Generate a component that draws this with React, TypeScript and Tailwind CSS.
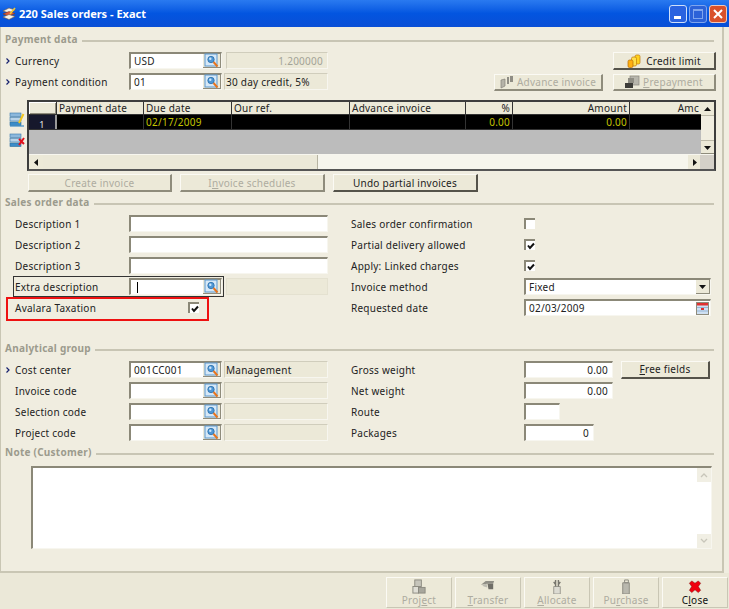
import type { ReactNode } from "react";

const SearchBtn = () => (
  <span className="ml-auto flex h-full w-[18px] shrink-0 items-center justify-center bg-[#ece9d8] border-r border-b border-[#8f8c7c]">
    <svg width="15" height="15" viewBox="0 0 15 15">
      <rect x="1" y="1" width="12" height="12" fill="#d6e8f7" stroke="#5a98cf" strokeWidth="1" />
      <circle cx="7" cy="6.5" r="3.2" fill="#4f97d6" stroke="#2a6fa8" strokeWidth="0.8" />
      <circle cx="6.3" cy="5.8" r="1.2" fill="#cfe6f8" />
      <line x1="9.5" y1="9" x2="13.5" y2="13.5" stroke="#e8741c" strokeWidth="2" />
    </svg>
  </span>
);

const Sunken = ({ className, children }: { className: string; children?: ReactNode }) => (
  <div className={`flex h-[17px] shrink-0 items-center bg-white border-t-2 border-l-2 border-t-[#8b8878] border-l-[#8b8878] border-r border-b border-r-[#f7f6ef] border-b-[#f7f6ef] ${className}`}>
    {children}
  </div>
);

const Lookup = ({ value, caret }: { value?: string; caret?: boolean }) => (
  <Sunken className="w-[93px]">
    <span className="pl-[3px] text-[#222]">{value}</span>
    {caret && <span className="ml-[3px] h-[11px] w-px bg-black" />}
    <SearchBtn />
  </Sunken>
);

const ReadOnly = ({ value, right }: { value?: string; right?: boolean }) => (
  <div className={`flex h-[17px] shrink-0 items-center bg-[#ece9d8] border border-t-[#d0cdbc] border-l-[#d0cdbc] border-r-[#f7f6ef] border-b-[#f7f6ef] px-[1px] ${right ? "ml-[4px] w-[102px] justify-end pr-[4px] text-[#a3a397]" : "ml-[2px] w-[104px] text-[#222]"}`}>
    {value}
  </div>
);

const Check = ({ on }: { on?: boolean }) => (
  <span className="flex h-[11px] w-[11px] items-center justify-center bg-white border-t-2 border-l-2 border-t-[#8b8878] border-l-[#8b8878]">
    {on && (
      <svg width="8" height="8" viewBox="0 0 8 8" className="shrink-0">
        <path d="M1 3.5 L3 6 L7 1.5" fill="none" stroke="#111" strokeWidth="2" />
      </svg>
    )}
  </span>
);

const Heading = ({ title, className }: { title: string; className: string }) => (
  <div className={`flex h-[13px] items-center pl-[4px] pr-[8px] ${className}`}>
    <span className="-mt-[2px] font-bold text-[#9c9b8d]">{title}</span>
    <span className="ml-[4px] mt-[3px] h-[2px] flex-1 bg-[#c8c5b4]" />
  </div>
);

const Label = ({ text, mark }: { text: string; mark?: boolean }) => (
  <>
    <span className="flex w-[14px] shrink-0 justify-end pr-[5px]">
      {mark && (
        <svg width="4" height="6" viewBox="0 0 4 6">
          <path d="M0.5 0.5 L3 3 L0.5 5.5" fill="none" stroke="#15206e" strokeWidth="1.2" />
        </svg>
      )}
    </span>
    <span className="w-[114px] shrink-0 text-[#222]">{text}</span>
  </>
);

const Row = ({ children, className = "" }: { children: ReactNode; className?: string }) => (
  <div className={`flex h-[17px] items-center ${className}`}>{children}</div>
);

const RightRow = ({ text, children }: { text: string; children: ReactNode }) => (
  <Row>
    <span className="w-[173px] shrink-0 text-[#222]">{text}</span>
    {children}
  </Row>
);

const Btn = ({ children, className = "", off }: { children: ReactNode; className?: string; off?: boolean }) => (
  <div className={`flex shrink-0 items-center justify-center bg-[#ece9d8] border-t border-l border-t-[#fbfaf4] border-l-[#fbfaf4] border-r-2 border-b-2 ${off ? "border-r-[#8f8c7c] border-b-[#8f8c7c] text-[#aeaca0]" : "border-r-[#55534a] border-b-[#55534a] text-[#222]"} ${className}`}>
    {children}
  </div>
);

const U = ({ children }: { children: ReactNode }) => <span className="underline">{children}</span>;

const columns = [
  { title: "Payment date", w: "w-[87px]" },
  { title: "Due date", w: "w-[88px]", value: "02/17/2009" },
  { title: "Our ref.", w: "w-[118px]" },
  { title: "Advance invoice", w: "w-[116px]" },
  { title: "%", w: "w-[47px]", value: "0.00", right: true },
  { title: "Amount", w: "w-[117px]", value: "0.00", right: true },
  { title: "Amc", w: "w-[71px]", right: true },
];

const TitleIcon = () => (
  <svg width="14" height="14" viewBox="0 0 14 14">
    <path d="M1 4 L7 1 L13 3 L7 6 Z" fill="#f4f1ea" stroke="#7a5a40" strokeWidth="0.6" />
    <path d="M1 7 L7 4.5 L13 6.5 L7 9 Z" fill="#e05a3a" stroke="#7a3a20" strokeWidth="0.6" />
    <path d="M1 10 L7 7.5 L13 9.5 L7 12.5 Z" fill="#f4f1ea" stroke="#7a5a40" strokeWidth="0.6" />
    <path d="M8 7 L13 1" stroke="#f2c832" strokeWidth="1.6" />
  </svg>
);

const EditRows = ({ del }: { del?: boolean }) => (
  <svg width="16" height="15" viewBox="0 0 16 15">
    <rect x="1" y="1" width="11" height="3.5" fill="#8cb8dc" stroke="#3a78ac" strokeWidth="0.6" />
    <rect x="1" y="5.5" width="11" height="3.5" fill="#b9d3e8" stroke="#3a78ac" strokeWidth="0.6" />
    <rect x="1" y="10" width="11" height="3.5" fill="#3b8cc8" stroke="#2a6c9c" strokeWidth="0.6" />
    {del ? (
      <path d="M10 6 L15 11 M15 5 L10 12" stroke="#e0101c" strokeWidth="2" />
    ) : (
      <>
        <path d="M10 11 L14.5 2" stroke="#f2c61e" strokeWidth="2" />
        <path d="M1 14 H15" stroke="#3a8cc8" strokeWidth="1.2" />
      </>
    )}
  </svg>
);

const Tri = ({ d }: { d: string }) => (
  <svg width="7" height="7" viewBox="0 0 7 7">
    <path d={d} fill="#111" />
  </svg>
);

const Coins = () => (
  <svg width="14" height="14" viewBox="0 0 14 14" className="mr-[5px]">
    <rect x="8" y="1" width="5" height="9" rx="1.5" fill="#ffd21e" stroke="#c07a08" strokeWidth="0.7" />
    <rect x="4.5" y="3" width="5" height="9" rx="1.5" fill="#ffe04a" stroke="#c07a08" strokeWidth="0.7" />
    <rect x="1" y="6" width="5" height="7.5" rx="1.5" fill="#ffb010" stroke="#b56a06" strokeWidth="0.7" />
  </svg>
);

const GreyFlags = () => (
  <svg width="14" height="14" viewBox="0 0 14 14" className="mr-[3px]">
    <path d="M1 5 L5 4 V11 L1 13 Z" fill="#b5b3a8" stroke="#85837a" strokeWidth="0.7" />
    <path d="M7 2 L9 2 V9 L7 9 Z M10 1 L13 1 V7 L10 7 Z" fill="#8f8d84" />
  </svg>
);

const GreyServer = () => (
  <svg width="15" height="14" viewBox="0 0 15 14" className="mr-[3px]">
    <rect x="5" y="1" width="9" height="9" fill="#b8b6ac" stroke="#8a887e" strokeWidth="0.7" />
    <path d="M0 13 V8 H8 V13 Z" fill="#3d3c38" />
    <rect x="3" y="3" width="6" height="5" fill="#8f8d84" />
  </svg>
);

const footerIcons: Record<string, ReactNode> = {
  project: (
    <>
      <rect x="4" y="1" width="7" height="7" fill="#c6c5bb" stroke="#8b8a80" />
      <rect x="2" y="8" width="6" height="7" fill="#dfded5" stroke="#8b8a80" />
      <rect x="8" y="9" width="7" height="6" fill="#a8a79d" stroke="#8b8a80" />
    </>
  ),
  transfer: (
    <>
      <path d="M1 6 L6 2 H15 L14 5 H8 Z" fill="#8f8e85" />
      <path d="M8 5 H14 V11 H9 Z" fill="#6f6e67" />
      <path d="M2 6 L7 5 L8 9 L4 8 Z" fill="#bdbcb2" />
    </>
  ),
  allocate: (
    <>
      <path d="M5 8 H12 V16 H5 Z" fill="#dcdbd2" stroke="#9a998f" />
      <path d="M7 1 V8 M10 1 V8 M5 3 L7 6 M12 3 L10 6" stroke="#77766e" strokeWidth="1.5" />
    </>
  ),
  purchase: (
    <>
      <path d="M5 4 H12 V16 H5 Z" fill="#b9b8ae" stroke="#8b8a80" />
      <path d="M7 1 H11 V4 H7 Z" fill="none" stroke="#8b8a80" />
    </>
  ),
};

const FootBtn = ({ icon, children, off = true }: { icon: string; children: ReactNode; off?: boolean }) => (
  <div className={`flex h-[31px] w-[66px] flex-col items-center justify-between bg-[#ece9d8] border border-t-[#fbfaf4] border-l-[#fbfaf4] border-r-[#c9c6b4] border-b-[#c9c6b4] pb-[1px] pt-[1px] ${off ? "text-[#aeaca0]" : "text-[#111]"}`}>
    <svg width="16" height="15" viewBox="0 0 17 16" className="shrink-0">
      {icon === "close" ? (
        <path d="M5 2 L8.5 4.5 L12 2 L14.5 4.5 L12 8 L14.5 12 L12 14.5 L8.5 11.5 L5 14.5 L2.5 12 L5 8 L2.5 4.5 Z" fill="#f0000f" stroke="#700" strokeWidth="0.5" />
      ) : (
        footerIcons[icon]
      )}
    </svg>
    <span className="leading-[12px]">{children}</span>
  </div>
);

export default function App() {
  return (
    <div className="flex h-[609px] w-[729px] flex-col overflow-hidden bg-[#f0ede0] font-['DejaVu_Sans',sans-serif] text-[10px] leading-none tracking-[0.25px]">
      {/* title bar */}
      <div className="flex h-[27px] shrink-0 items-center bg-gradient-to-b from-[#2a7af0] via-[#0355e0] to-[#0a4fd6] pl-[2px] pr-[2px]">
        <TitleIcon />
        <span className="ml-[3px] text-[11px] font-bold tracking-normal text-white">220 Sales orders - Exact</span>
        <div className="ml-auto flex gap-[2px]">
          <div className="flex h-[18px] w-[18px] items-end rounded-[3px] border border-[#cfe0fb] bg-[#2a63e0] pb-[3px] pl-[4px]">
            <span className="h-[3px] w-[7px] bg-white" />
          </div>
          <div className="flex h-[18px] w-[18px] items-center justify-center rounded-[3px] border border-[#7fa5ee] bg-[#2c62d8]">
            <span className="h-[10px] w-[10px] border border-t-2 border-[#7fa5ee]" />
          </div>
          <div className="flex h-[18px] w-[18px] items-center justify-center rounded-[3px] border border-[#f0c8b8] bg-[#d9502a]">
            <svg width="10" height="10" viewBox="0 0 10 10">
              <path d="M1 1 L9 9 M9 1 L1 9" stroke="#fff" strokeWidth="2" />
            </svg>
          </div>
        </div>
      </div>

      {/* main panel */}
      <div className="flex h-[546px] w-[724px] shrink-0 flex-col border-r-2 border-b-2 border-l border-[#c9c6b4]">
        <Heading title="Payment data" className="mt-[6px]" />
        <div className="mt-[6px] flex h-[38px]">
          <div className="flex flex-col gap-[4px]">
            <Row>
              <Label text="Currency" mark />
              <Lookup value="USD" />
              <ReadOnly value="1.200000" right />
            </Row>
            <Row>
              <Label text="Payment condition" mark />
              <Lookup value="01" />
              <ReadOnly value="30 day credit, 5%" />
            </Row>
          </div>
          <div className="ml-auto mr-[6px] flex w-[222px] flex-col items-end gap-[4px]">
            <Btn className="h-[18px] w-[103px]">
              <Coins />
              Credit limit
            </Btn>
            <div className="flex gap-[10px]">
              <Btn off className="h-[17px] w-[109px]">
                <GreyFlags />
                Advance invoice
              </Btn>
              <Btn off className="h-[17px] w-[103px]">
                <GreyServer />
                <U>P</U>repayment
              </Btn>
            </div>
          </div>
        </div>

        {/* grid */}
        <div className="mt-[10px] flex">
          <div className="flex w-[26px] shrink-0 flex-col gap-[6px] pl-[8px] pt-[12px]">
            <EditRows />
            <EditRows del />
          </div>
          <div className="flex h-[71px] w-[689px] flex-col border-2 border-[#3d3d3d] border-b-[#555]">
            <div className="flex min-h-0 flex-1">
              <div className="flex w-[673px] flex-col">
                <div className="flex h-[13px] border-b border-[#333] bg-[#ece9d8]">
                  <div className="h-full w-[28px] shrink-0 border-r border-[#333] bg-[#ece9d8] shadow-[inset_1px_1px_0_#fff,inset_-1px_-1px_0_#8f8c7c]" />
                  {columns.map((c) => (
                    <div key={c.title} className={`flex shrink-0 items-center overflow-hidden border-r border-[#333] px-[2px] text-[#222] last:border-r-0 ${c.w} ${c.right ? "justify-end" : ""}`}>
                      {c.title}
                    </div>
                  ))}
                </div>
                <div className="flex h-[14px] bg-black">
                  <div className="flex h-full w-[28px] shrink-0 items-end justify-center border-r-2 border-[#999] bg-[#16182c] text-[9px] text-[#e8e8e8]">1</div>
                  {columns.map((c) => (
                    <div key={c.title} className={`flex shrink-0 items-center border-r border-[#333] px-[2px] text-[#c4c400] last:border-r-0 ${c.w} ${c.right ? "justify-end" : ""}`}>
                      {c.value}
                    </div>
                  ))}
                </div>
                <div className="flex-1 border-t border-[#333] bg-[#bcbcbc]" />
              </div>
              <div className="flex w-[14px] flex-col bg-[#f5f4ec]">
                <div className="flex h-[13px] items-center justify-center bg-[#ece9d8]">
                  <Tri d="M3.5 2 L7 6 H0 Z" />
                </div>
                <div className="h-[26px] border-t border-[#bdbaa9] border-b bg-[#f0ede0]" />
                <div className="flex flex-1 items-center justify-center border-b border-[#8f8c7c] bg-[#ece9d8]">
                  <Tri d="M0 2 H7 L3.5 6 Z" />
                </div>
              </div>
            </div>
            <div className="flex h-[15px] shrink-0 border-t border-[#f7f6ef] bg-[#f6f5ed]">
              <div className="flex w-[14px] items-center justify-center bg-[#ece9d8]">
                <Tri d="M5 0 V7 L1 3.5 Z" />
              </div>
              <div className="w-[275px] border-r border-[#b6b3a2] bg-[#ebe8d8]" />
              <div className="flex-1" />
              <div className="flex w-[12px] items-center justify-center bg-[#ece9d8]">
                <Tri d="M2 0 V7 L6 3.5 Z" />
              </div>
              <div className="w-[14px] bg-[#d4d0c8]" />
            </div>
          </div>
        </div>

        <div className="ml-[27px] mt-[3px] flex gap-[8px]">
          <Btn off className="h-[18px] w-[144px]">Create invoice</Btn>
          <Btn off className="h-[18px] w-[145px]">I<U>n</U>voice schedules</Btn>
          <Btn className="h-[18px] w-[145px]">Undo partial invoices</Btn>
        </div>

        <Heading title="Sales order data" className="mt-[4px]" />
        <div className="mt-[6px] grid grid-cols-[350px_1fr]">
          <div className="flex flex-col gap-[4px]">
            <Row><Label text="Description 1" /><Sunken className="w-[199px]" /></Row>
            <Row><Label text="Description 2" /><Sunken className="w-[199px]" /></Row>
            <Row><Label text="Description 3" /><Sunken className="w-[199px]" /></Row>
            <Row>
              <Label text="" />
              <span className="-ml-[114px] flex outline outline-1 outline-offset-1 outline-[#333]">
                <span className="w-[114px] shrink-0 self-center text-[#222]">Extra description</span>
                <Lookup caret />
              </span>
              <span className="ml-[4px] h-[17px] w-[102px] border border-[#e4e1d0] bg-[#ece9d8]" />
            </Row>
            <Row className="relative">
              <Label text="Avalara Taxation" />
              <span className="ml-[59px]"><Check on /></span>
              <div className="absolute left-[5px] top-[-2px] h-[24px] w-[203px] border-2 border-[#ee1111]" />
            </Row>
          </div>
          <div className="flex flex-col gap-[4px]">
            <RightRow text="Sales order confirmation"><Check /></RightRow>
            <RightRow text="Partial delivery allowed"><Check on /></RightRow>
            <RightRow text="Apply: Linked charges"><Check on /></RightRow>
            <RightRow text="Invoice method">
              <Sunken className="w-[187px]">
                <span className="pl-[3px] text-[#222]">Fixed</span>
                <span className="ml-auto flex h-full w-[14px] items-center justify-center border-r border-b border-[#8f8c7c] bg-[#ece9d8]">
                  <Tri d="M0 2 H7 L3.5 6 Z" />
                </span>
              </Sunken>
            </RightRow>
            <RightRow text="Requested date">
              <Sunken className="w-[187px]">
                <span className="pl-[3px] text-[#222]">02/03/2009</span>
                <span className="ml-auto flex h-full w-[15px] items-center justify-center">
                  <svg width="13" height="13" viewBox="0 0 13 13">
                    <rect x="0.5" y="0.5" width="12" height="12" fill="#cfe0f2" stroke="#8f8c7c" />
                    <rect x="1" y="1" width="11" height="2.5" fill="#e03030" />
                    <rect x="5" y="6" width="3" height="2" fill="#e03030" />
                    <path d="M1 5.5 H12 M1 9 H12" stroke="#7fa5cc" strokeWidth="0.7" />
                  </svg>
                </span>
              </Sunken>
            </RightRow>
          </div>
        </div>

        <Heading title="Analytical group" className="mt-[26px]" />
        <div className="mt-[6px] grid grid-cols-[350px_1fr]">
          <div className="flex flex-col gap-[4px]">
            <Row><Label text="Cost center" mark /><Lookup value="001CC001" /><ReadOnly value="Management" /></Row>
            <Row><Label text="Invoice code" /><Lookup /><ReadOnly /></Row>
            <Row><Label text="Selection code" /><Lookup /><ReadOnly /></Row>
            <Row><Label text="Project code" /><Lookup /><ReadOnly /></Row>
          </div>
          <div className="flex flex-col gap-[4px]">
            <RightRow text="Gross weight">
              <Sunken className="w-[89px] justify-end pr-[4px] text-[#222]">0.00</Sunken>
              <Btn className="ml-[8px] h-[18px] w-[89px]"><U>F</U>ree fields</Btn>
            </RightRow>
            <RightRow text="Net weight">
              <Sunken className="w-[89px] justify-end pr-[4px] text-[#222]">0.00</Sunken>
            </RightRow>
            <RightRow text="Route"><Sunken className="w-[36px]" /></RightRow>
            <RightRow text="Packages">
              <Sunken className="w-[70px] justify-end pr-[4px] text-[#222]">0</Sunken>
            </RightRow>
          </div>
        </div>

        <Heading title="Note (Customer)" className="mt-[5px]" />
        <div className="ml-[30px] mt-[7px] flex h-[83px] w-[681px] justify-end border-t-2 border-l-2 border-r border-b border-t-[#8b8878] border-l-[#8b8878] border-r-[#f7f6ef] border-b-[#f7f6ef] bg-white">
          <div className="flex w-[14px] flex-col justify-between">
            <div className="flex h-[14px] items-center justify-center bg-[#f1efe4]">
              <svg width="8" height="6" viewBox="0 0 8 6"><path d="M1 5 L4 2 L7 5" fill="none" stroke="#c8c6ba" strokeWidth="1.3" /></svg>
            </div>
            <div className="flex h-[14px] items-center justify-center bg-[#f1efe4]">
              <svg width="8" height="6" viewBox="0 0 8 6"><path d="M1 1 L4 4 L7 1" fill="none" stroke="#c8c6ba" strokeWidth="1.3" /></svg>
            </div>
          </div>
        </div>
      </div>

      {/* footer */}
      <div className="flex flex-1 items-end justify-end gap-[3px] bg-[#ebe8d8] pb-[1px] pr-[1px]">
        <FootBtn icon="project">Proj<U>e</U>ct</FootBtn>
        <FootBtn icon="transfer"><U>T</U>ransfer</FootBtn>
        <FootBtn icon="allocate"><U>A</U>llocate</FootBtn>
        <FootBtn icon="purchase">Pu<U>r</U>chase</FootBtn>
        <FootBtn icon="close" off={false}>C<U>l</U>ose</FootBtn>
      </div>
    </div>
  );
}
